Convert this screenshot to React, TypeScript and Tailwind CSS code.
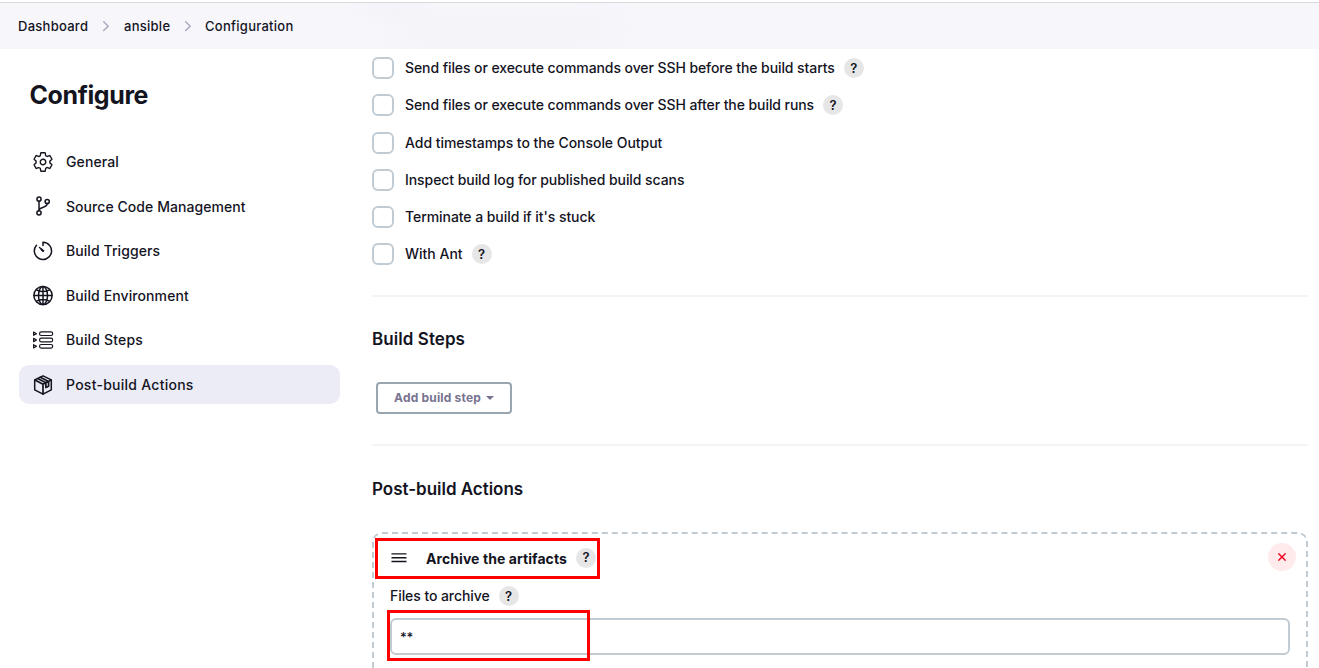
import React from "react";
import { IoSettingsOutline } from "react-icons/io5";

const svgProps = {
  viewBox: "0 0 24 24",
  fill: "none",
  stroke: "currentColor",
  strokeWidth: 1.5,
  strokeLinecap: "round" as const,
  strokeLinejoin: "round" as const,
  className: "h-6 w-6",
};

function BranchIcon() {
  return (
    <svg {...svgProps}>
      <circle cx="8" cy="4.100" r="2.1" />
      <circle cx="8" cy="17.800" r="2.1" />
      <circle cx="16.2" cy="6.500" r="2.1" />
      <path d="M8 6.200v9.500M16.200 8.600c0 5-8.200 3-8.200 7" />
    </svg>
  );
}

function TimerIcon() {
  return (
    <svg {...svgProps}>
      <path d="M12 6.500V3.300a8.600 8.600 0 1 1-6.500 2.900" />
      <path d="M8.200 8.300l3.200 4.100a.8.8 0 0 0 1.200-1.200z" fill="currentColor" strokeWidth={1} />
    </svg>
  );
}

function GlobeIcon() {
  return (
    <svg {...svgProps} viewBox="0 0.5 24 24">
      <circle cx="12" cy="12" r="9.100" />
      <ellipse cx="12" cy="12" rx="4.500" ry="9.100" />
      <path d="M12 3v18M3 12h18M5.600 6.300c3.600 2.300 9.200 2.300 12.800 0M5.600 17.700c3.600-2.300 9.200-2.300 12.800 0" />
    </svg>
  );
}

function StepsIcon() {
  return (
    <svg {...svgProps} strokeWidth={1.2}>
      {[5.7, 12, 18.3].map((y) => (
        <g key={y}>
          <rect x="8.600" y={y - 1.8} width="13" height="3.600" rx="1.500" />
          <path d={`M2.600 ${y - 1.6}l2.900 1.600l-2.900 1.600z`} />
        </g>
      ))}
    </svg>
  );
}

function PackageIcon() {
  return (
    <svg {...svgProps}>
      <path d="M12 2.800l8.300 4.100v9.900L12 21.200l-8.300-4.400V6.900z" />
      <path d="M3.900 7.100L12 11.200l8.100-4.100M12 11.200v9.800M6.600 5.600l8.300 4.200M9.300 4.200l8.300 4.200M14.900 9.900v4.700l2.700-1.400V8.500" strokeWidth={1.700} />
    </svg>
  );
}

function Help({ className = "" }: { className?: string }) {
  return (
    <span
      className={`flex h-5 w-5 shrink-0 items-center justify-center rounded-full bg-[#e6e6e6] text-[13px] leading-none font-semibold ${className}`}
    >
      ?
    </span>
  );
}

function Chevron() {
  return (
    <svg viewBox="0 0 8 12" className="h-3 w-2" fill="none" stroke="#a9a7bd" strokeWidth="1.4" strokeLinecap="round" strokeLinejoin="round">
      <path d="M1.700 1.800L6.200 6.200l-4.500 4.400" />
    </svg>
  );
}

const navigation = [
  { label: "General", icon: <IoSettingsOutline className="h-[22px] w-[22px]" />, spacing: "tracking-[0.1px]" },
  { label: "Source Code Management", icon: <BranchIcon />, spacing: "tracking-[0.06px]" },
  { label: "Build Triggers", icon: <TimerIcon />, spacing: "tracking-[0.07px]" },
  { label: "Build Environment", icon: <GlobeIcon />, spacing: "tracking-[0.1px]" },
  { label: "Build Steps", icon: <StepsIcon />, spacing: "tracking-[0.16px]" },
  { label: "Post-build Actions", icon: <PackageIcon />, spacing: "tracking-[0.26px]", active: true },
];

const options = [
  { label: "Send files or execute commands over SSH before the build starts", help: true, spacing: "tracking-[-0.08px]" },
  { label: "Send files or execute commands over SSH after the build runs", help: true, spacing: "tracking-[-0.08px]" },
  { label: "Add timestamps to the Console Output", spacing: "tracking-[-0.045px]" },
  { label: "Inspect build log for published build scans", spacing: "tracking-[-0.065px]" },
  { label: "Terminate a build if it's stuck", spacing: "tracking-[-0.06px]" },
  { label: "With Ant", help: true, spacing: "tracking-normal" },
];

export default function App() {
  return (
    <div className="flex h-[668px] w-[1319px] flex-col overflow-hidden bg-white pt-0.5 font-['Inter',sans-serif] text-sm font-medium text-[#14141f]">
      <header className="relative flex h-[47px] shrink-0 items-center overflow-hidden border-t border-[#d9d9df] bg-[#f6f6fb] pl-[18px]">
        <div className="absolute top-3 left-[400px] h-7 w-[210px] rounded-full bg-[#f3f3f8] blur-md" />
        <div className="absolute -top-3 left-[365px] h-5 w-[50px] rounded-full bg-[#f2f2f7] blur-sm" />
        <nav className="flex items-center text-[13px] tracking-[0.27px]">
          <span className="w-[84px]">Dashboard</span>
          <Chevron />
          <span className="ml-[14px] w-[67px]">ansible</span>
          <span className="-ml-[7px] flex"><Chevron /></span>
          <span className="ml-[13px]">Configuration</span>
        </nav>
      </header>

      <div className="flex min-h-0 flex-1">
        <aside className="w-[372px] shrink-0 pl-[19px]">
          <h1 className="mt-[30px] ml-[10.500px] text-[25px] leading-8 font-bold tracking-[-0.4px]">Configure</h1>
          <nav className="mt-[31.500px] flex w-[321px] flex-col gap-[5.600px]">
            {navigation.map((item) => (
              <a
                key={item.label}
                className={`flex h-[39px] items-center rounded-[10px] pl-3 ${item.active ? "bg-[#ececf6]" : ""}`}
              >
                <span className="flex w-6 justify-center">{item.icon}</span>
                <span className={`ml-[11px] ${item.spacing}`}>{item.label}</span>
              </a>
            ))}
          </nav>
        </aside>

        <main className="flex w-[936px] shrink-0 flex-col">
          <div className="mt-2 flex shrink-0 flex-col gap-[15.250px]">
            {options.map((option) => (
              <label key={option.label} className="flex h-[22px] items-center">
                <span className="h-[22px] w-[22px] rounded-[6px] border-2 border-[#c1cbd3]" />
                <span className={`ml-[11px] ${option.spacing}`}>{option.label}</span>
                {option.help && <Help className="ml-[9px]" />}
              </label>
            ))}
          </div>

          <section className="mt-[29.750px] h-[149px] shrink-0 border-t-2 border-[#f3f3f8] pt-[30px]">
            <h2 className="text-[17px] leading-[25px] font-semibold tracking-[0.06px]">Build Steps</h2>
            <button className="mt-[30px] ml-1 flex h-8 w-[136px] items-center rounded-[4px] border-2 border-[#98a6b0] pl-4 text-[12px] font-bold tracking-[0.2px] text-[#777390]">
              Add build step
              <svg viewBox="0 0 8 4" className="ml-[5px] h-1 w-2" fill="currentColor">
                <path d="M0 0h8L4 4z" />
              </svg>
            </button>
          </section>

          <section className="shrink-0 border-t-2 border-[#f3f3f8] pt-[31px]">
            <h2 className="text-[17px] leading-[25px] font-semibold tracking-[-0.02px]">Post-build Actions</h2>
            <div className="relative mt-[30px] h-[180px] rounded-[10px] border-2 border-dashed border-[#c1cbd3] px-4 pt-[9px]">
              <div className="flex h-7 items-center">
                <svg viewBox="0 0 18 12" className="mt-px h-3 w-[18px]" stroke="currentColor" strokeWidth="1.400">
                  <path d="M1.500 1.900h15M1.500 5.700h15M1.500 9.500h15" />
                </svg>
                <span className="mt-[3px] ml-[18px] font-bold tracking-[0.07px]">Archive the artifacts</span>
                <Help className="mt-px ml-[9px]" />
                <button className="-mr-[6px] ml-auto flex h-7 w-7 items-center justify-center rounded-full bg-[#ffebeb] text-[#f0001c]">
                  <svg viewBox="0 0 8 8" className="h-2 w-2" stroke="currentColor" strokeWidth="1.400">
                    <path d="M.4.4l7.200 7.200M7.600.4L.4 7.600" />
                  </svg>
                </button>
              </div>
              <div className="mt-[15px] flex h-5 items-center">
                <span className="tracking-[-0.07px]">Files to archive</span>
                <Help className="ml-[9px]" />
              </div>
              <div className="mt-[12px] flex h-[37px] w-[900px] items-center rounded-[6px] border-2 border-[#c1cbd3] pt-0.5 pl-[8px] text-[13px] tracking-[-0.2px]">
                **
              </div>
              <div className="absolute top-[4px] left-px h-[41px] w-[225px] border-[3px] border-[#ff0000]" />
              <div className="absolute top-[76px] left-[13px] h-[51px] w-[203px] border-[3px] border-[#ff0000]" />
            </div>
          </section>
        </main>
      </div>
    </div>
  );
}
